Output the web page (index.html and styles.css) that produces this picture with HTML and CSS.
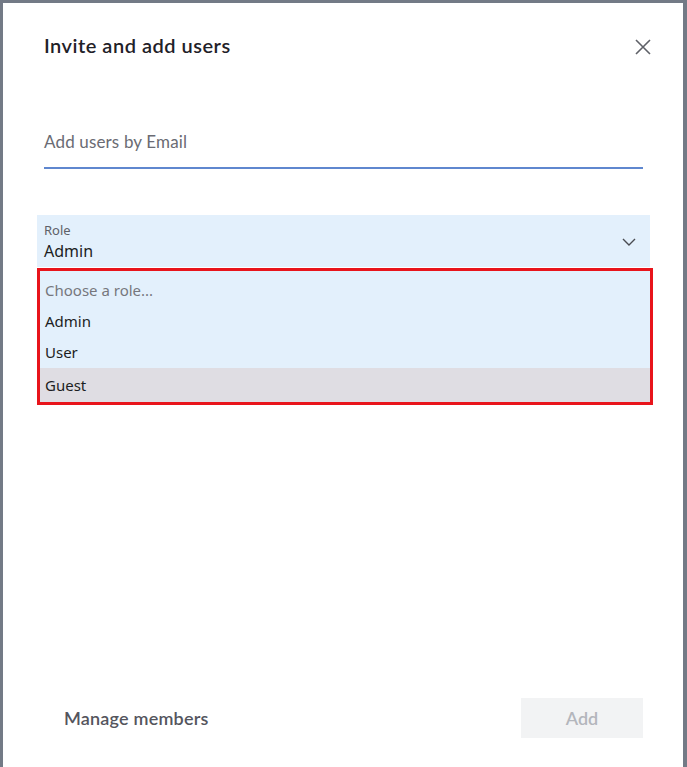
FILE: index.html
```html
<!DOCTYPE html>
<html>
<head>
<meta charset="utf-8">
<link rel="stylesheet" href="styles.css">
</head>
<body>
<div class="frame">
  <div class="dialog">
    <div class="header">
      <h1 class="title">Invite and add users</h1>
      <button class="close" aria-label="Close">
        <svg width="16" height="16" viewBox="0 0 16 16"><path d="M1 1 L15 15 M15 1 L1 15" stroke="#5f6168" stroke-width="1.6" fill="none"/></svg>
      </button>
    </div>
    <div class="email">
      <span class="placeholder">Add users by Email</span>
    </div>
    <div class="select">
      <div class="select-text">
        <span class="select-label">Role</span>
        <span class="select-value">Admin</span>
      </div>
      <svg class="chevron" width="14" height="8" viewBox="0 0 14 8"><path d="M1 1 L7 7 L13 1" stroke="#4a4c52" stroke-width="1.4" fill="none"/></svg>
    </div>
    <ul class="options">
      <li class="option muted">Choose a role...</li>
      <li class="option">Admin</li>
      <li class="option">User</li>
      <li class="option hover">Guest</li>
    </ul>
    <div class="spacer"></div>
    <div class="footer">
      <span class="manage">Manage members</span>
      <button class="add">Add</button>
    </div>
  </div>
</div>
</body>
</html>
```
FILE: styles.css
```css
html, body {
  margin: 0;
  padding: 0;
  height: 100%;
  background: #ffffff;
}
.frame {
  box-sizing: border-box;
  height: 767px;
  border-top: 3px solid #737a86;
  border-left: 3px solid #737a86;
  border-right: 4px solid #737a86;
  background: #ffffff;
}
.dialog {
  box-sizing: border-box;
  height: 100%;
  padding: 0 40px 0 41px;
  display: flex;
  flex-direction: column;
  font-family: Lato, "Noto Sans", sans-serif;
}
.header {
  display: flex;
  align-items: center;
  justify-content: space-between;
  margin-top: 30px;
  height: 24px;
}
.title {
  margin: 0;
  font-size: 20px;
  font-weight: 600;
  color: #1f2128;
  letter-spacing: 0.5px;
}
.close {
  border: 0;
  background: none;
  padding: 0;
  width: 16px;
  height: 16px;
  display: flex;
  margin: 3px -8px 0 0;
}
.email {
  margin-top: 72px;
  height: 38px;
  border-bottom: 2px solid #5f87cf;
  display: flex;
  align-items: flex-start;
}
.placeholder {
  font-size: 17px;
  color: #6a6b73;
  line-height: 26px;
  letter-spacing: 0.15px;
}
.select {
  margin: 46px -7px 0 -7px;
  height: 52px;
  background: #e3f0fc;
  display: flex;
  align-items: center;
  justify-content: space-between;
  padding: 0 14px 0 7px;
  font-family: "Noto Sans", sans-serif;
}
.select-text {
  display: flex;
  flex-direction: column;
  margin-top: 1px;
}
.select-label {
  font-size: 13px;
  color: #5e6168;
  line-height: 18px;
}
.select-value {
  font-size: 16px;
  color: #1c1d22;
  line-height: 24px;
}
.chevron {
  margin-top: 2px;
}
.options {
  list-style: none;
  margin: 1px -10px 0 -7px;
  padding: 4px 0 0 0;
  border: 3px solid #e8141b;
  background: #e3f0fc;
  font-family: "Noto Sans", sans-serif;
  font-size: 15px;
}
.option {
  height: 31px;
  line-height: 31px;
  padding-left: 5px;
  color: #1c1d22;
}
.option.muted {
  color: #76777d;
}
.option.hover {
  background: #dfdde3;
  height: 34px;
  line-height: 34px;
}
.spacer {
  flex: 1;
}
.footer {
  display: flex;
  align-items: center;
  justify-content: space-between;
  margin-bottom: 29px;
  padding-left: 20px;
}
.manage {
  font-size: 18px;
  font-weight: 600;
  color: #54555d;
  letter-spacing: 0.2px;
}
.add {
  width: 122px;
  height: 40px;
  border: 0;
  background: #f2f3f4;
  color: #b4b6bc;
  font-family: Lato, "Noto Sans", sans-serif;
  font-size: 18px;
  font-weight: 600;
}
```
